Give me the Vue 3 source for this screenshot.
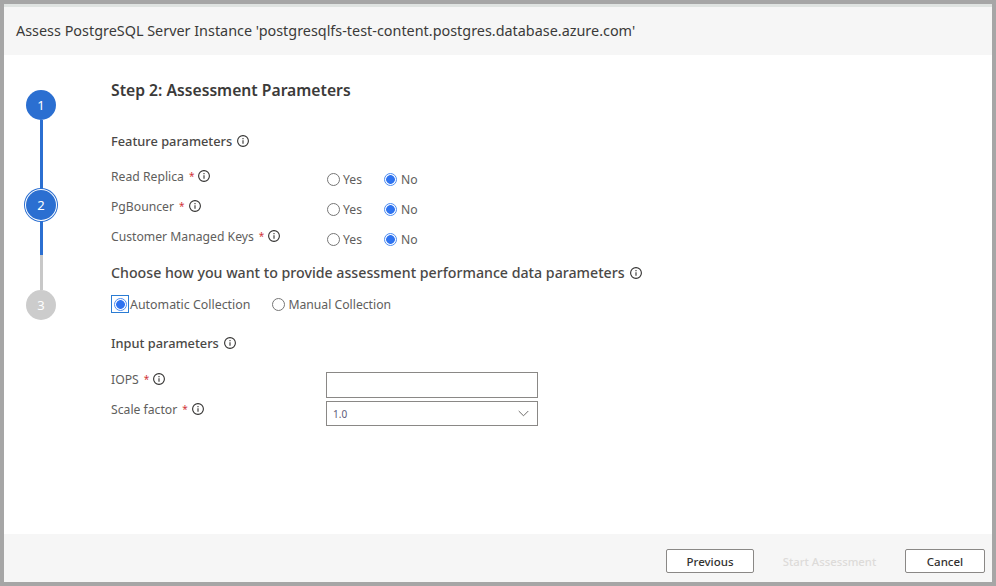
<script setup>
const features = [
  { label: 'Read Replica' },
  { label: 'PgBouncer' },
  { label: 'Customer Managed Keys' }
]
</script>

<template>
  <div class="frame">
    <div class="dialog">
      <header class="title_bar">Assess PostgreSQL Server Instance 'postgresqlfs-test-content.postgres.database.azure.com'</header>

      <div class="body">
        <aside class="stepper">
          <div class="step">1</div>
          <div class="line"></div>
          <div class="step step_current">2</div>
          <div class="line line_half"></div>
          <div class="step step_off">3</div>
        </aside>

        <main class="content">
          <h1 class="step_title">Step 2: Assessment Parameters</h1>

          <h2 class="section first">
            Feature parameters
            <svg class="info" viewBox="0 0 12 12"><circle cx="6" cy="6" r="5.4" /><path d="M6 5.2v3.6M6 3.1v1.1" /></svg>
          </h2>

          <div class="feature_rows">
            <div class="row" v-for="f in features" :key="f.label">
              <div class="label">
                {{ f.label }}<span class="req">*</span>
                <svg class="info" viewBox="0 0 12 12"><circle cx="6" cy="6" r="5.4" /><path d="M6 5.2v3.6M6 3.1v1.1" /></svg>
              </div>
              <div class="radios">
                <label class="radio yes"><input type="radio" :name="f.label" />Yes</label>
                <label class="radio"><input type="radio" :name="f.label" checked />No</label>
              </div>
            </div>
          </div>

          <h2 class="section choose">
            Choose how you want to provide assessment performance data parameters
            <svg class="info" viewBox="0 0 12 12"><circle cx="6" cy="6" r="5.4" /><path d="M6 5.2v3.6M6 3.1v1.1" /></svg>
          </h2>

          <div class="collect">
            <label class="radio auto"><span class="focus"><input type="radio" name="collect" checked /></span>Automatic Collection</label>
            <label class="radio manual"><input type="radio" name="collect" />Manual Collection</label>
          </div>

          <h2 class="section input_head">
            Input parameters
            <svg class="info" viewBox="0 0 12 12"><circle cx="6" cy="6" r="5.4" /><path d="M6 5.2v3.6M6 3.1v1.1" /></svg>
          </h2>

          <div class="input_rows">
            <div class="row_input">
              <div class="label label_input">
                IOPS<span class="req">*</span>
                <svg class="info" viewBox="0 0 12 12"><circle cx="6" cy="6" r="5.4" /><path d="M6 5.2v3.6M6 3.1v1.1" /></svg>
              </div>
              <div class="text_box"></div>
            </div>
            <div class="row_input">
              <div class="label label_input label_scale">
                Scale factor<span class="req">*</span>
                <svg class="info" viewBox="0 0 12 12"><circle cx="6" cy="6" r="5.4" /><path d="M6 5.2v3.6M6 3.1v1.1" /></svg>
              </div>
              <div class="select_box">
                <span>1.0</span>
                <svg class="chevron" viewBox="0 0 12 7"><path d="M.8.8 6 6l5.2-5.2" /></svg>
              </div>
            </div>
          </div>
        </main>
      </div>

      <footer class="footer">
        <button class="boton">Previous</button>
        <button class="boton boton_off">Start Assessment</button>
        <button class="boton boton_cancel">Cancel</button>
      </footer>
    </div>
  </div>
</template>

<style>
html, body {
  margin: 0;
  background: #a6a6a6;
}
</style>

<style scoped>
.frame {
  width: 996px;
  height: 586px;
  box-sizing: border-box;
  padding: 4px;
  background: #a6a6a6;
  font-family: "Noto Sans", "Open Sans", sans-serif;
  color: #605e5c;
  overflow: hidden;
}

.dialog {
  height: 578px;
  display: flex;
  flex-direction: column;
  background: #fff;
}

.title_bar {
  height: 48px;
  line-height: 48px;
  border-top: 3px solid #dfe3e1;
  padding-left: 12px;
  background: #f6f6f6;
  color: #3b3a39;
  font-size: 14.4px;
}

.body {
  flex: 1;
  display: flex;
}

.stepper {
  width: 107px;
  padding: 35px 0 0 22px;
  box-sizing: border-box;
  display: flex;
  flex-direction: column;
}

.step {
  position: relative;
  z-index: 1;
  width: 30px;
  height: 30px;
  border-radius: 50%;
  background: #2b6fd1;
  color: #fff;
  font-size: 13px;
  line-height: 30px;
  text-align: center;
}

.step_current {
  box-shadow: 0 0 0 1px #fff, 0 0 0 2px #2b6fd1;
}

.step_off {
  background: #cccccc;
}

.line {
  width: 3px;
  height: 70px;
  margin-left: 14px;
  background: #2b6fd1;
}

.line_half {
  background: linear-gradient(#2b6fd1 0 35px, #c8c8c8 35px);
}

.content {
  flex: 1;
}

h1, h2 {
  margin: 0;
}

.step_title {
  margin-top: 24px;
  height: 22px;
  line-height: 22px;
  font-size: 15.7px;
  font-weight: 600;
  color: #3b3a39;
}

.section {
  display: flex;
  align-items: center;
  gap: 5px;
  height: 20px;
  line-height: 20px;
  font-size: 12.8px;
  font-weight: 500;
  color: #4a4846;
}

.first {
  margin-top: 30px;
}

.feature_rows {
  margin-top: 13px;
}

.row {
  display: flex;
  height: 30px;
}

.label {
  width: 215px;
  height: 24px;
  display: flex;
  align-items: center;
  gap: 4px;
  font-size: 12.2px;
}

.label_input {
  height: 14px;
}

.label_scale {
  margin-top: 1px;
}

.req {
  margin-left: 1px;
  color: #d13438;
  font-size: 10px;
}

.info {
  width: 12px;
  height: 12px;
  flex: none;
  fill: none;
  stroke: #323130;
  stroke-width: 1.1;
}

.radios {
  display: flex;
  padding: 6px 0 0 1px;
}

.radio {
  display: flex;
  align-items: center;
  height: 18px;
  font-size: 12.2px;
}

.radio.yes {
  width: 57px;
}

input[type="radio"] {
  appearance: none;
  width: 13px;
  height: 13px;
  margin: 0 4px 0 0;
  border: 1px solid #767676;
  border-radius: 50%;
  background: #fff;
}

.yes input[type="radio"],
.manual input[type="radio"] {
  margin-right: 3px;
}

input[type="radio"]:checked {
  border-color: #4d8df2;
  background: radial-gradient(circle, #2f73f0 0 4px, #fff 4.7px);
}

.choose {
  margin-top: 8px;
  height: 21px;
  font-size: 14.2px;
}

.collect {
  display: flex;
  margin-top: 12px;
}

.collect .radio {
  font-size: 12.4px;
}

.collect .manual {
  font-size: 12.2px;
}

.focus {
  width: 18px;
  height: 18px;
  margin-right: 1px;
  box-sizing: border-box;
  border: 1px solid #2b7cd3;
  display: flex;
  align-items: center;
  justify-content: center;
}

.focus input[type="radio"] {
  margin: 0;
}

.manual {
  margin-left: 22px;
}

.input_head {
  margin-top: 20px;
}

.input_rows {
  margin-top: 19px;
}

.row_input {
  display: flex;
  margin-bottom: 3px;
}

.text_box,
.select_box {
  width: 212px;
  box-sizing: border-box;
  border: 1px solid #8a8886;
}

.text_box {
  height: 26px;
}

.select_box {
  height: 25px;
  display: flex;
  align-items: center;
  justify-content: space-between;
  padding: 0 8px 0 6px;
  font-size: 10px;
  color: #5c5a78;
}

.chevron {
  width: 11px;
  height: 7px;
  fill: none;
  stroke: #605e5c;
  stroke-width: 1;
}

.footer {
  height: 48px;
  box-sizing: border-box;
  padding: 15px 7px 0 0;
  background: #f6f6f6;
  display: flex;
  justify-content: flex-end;
  gap: 8px;
}

.boton {
  width: 88px;
  height: 24px;
  padding: 0;
  border: 1px solid #8a8886;
  border-radius: 2px;
  background: #fff;
  color: #323130;
  font-family: inherit;
  font-size: 11.5px;
  font-weight: 500;
}

.boton_off {
  width: 135px;
  border-color: transparent;
  background: transparent;
  color: #dddbd9;
  font-size: 11.3px;
  font-weight: 500;
}

.boton_cancel {
  width: 80px;
}
</style>
